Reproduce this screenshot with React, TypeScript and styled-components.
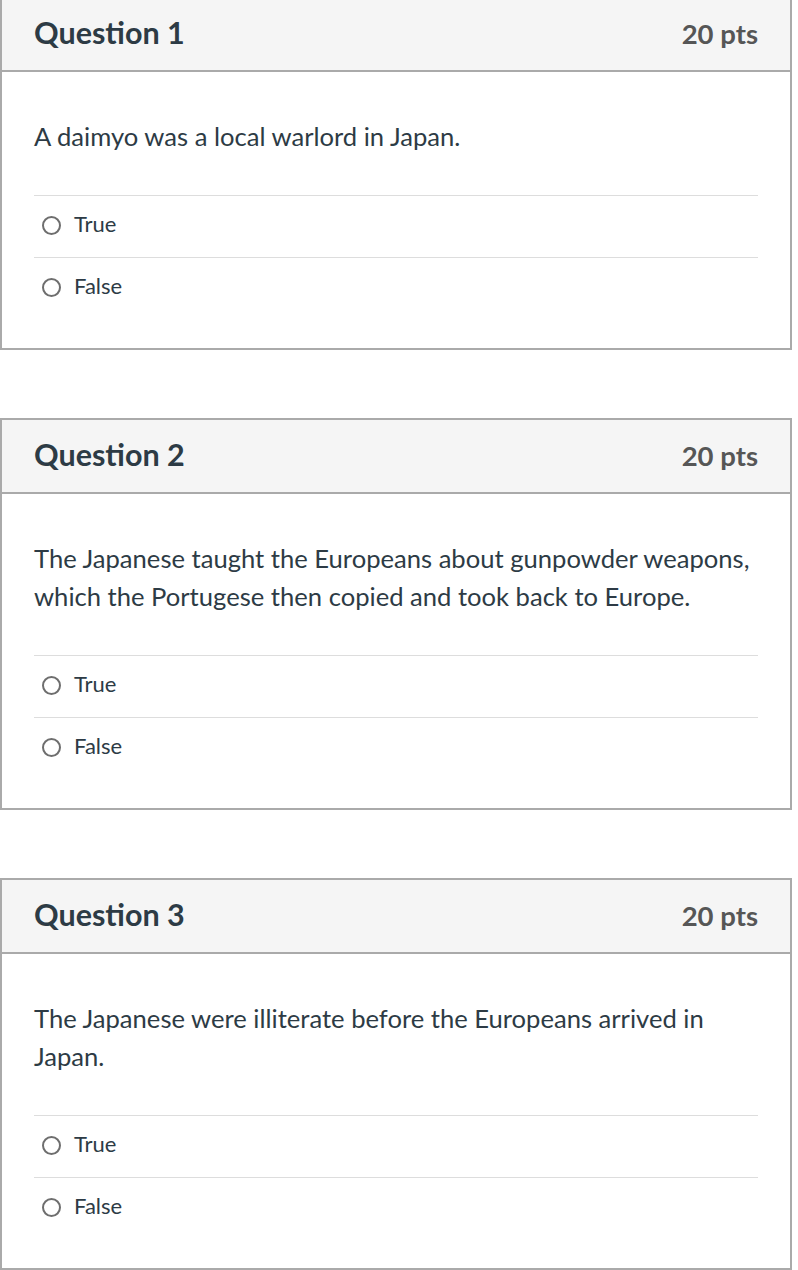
import * as React from 'react';
import styled, { createGlobalStyle } from 'styled-components';

const GlobalStyle = createGlobalStyle`
  html, body {
    margin: 0;
    padding: 0;
    background: #ffffff;
  }
  body {
    font-family: Lato, "Noto Sans", "Liberation Sans", sans-serif;
    color: #2d3b45;
  }
`;

export const Page = styled.div`
  width: 798px;
  display: flex;
  flex-direction: column;
  gap: 68px;
  margin-top: -4px;
`;

export const Card = styled.section`
  width: 792px;
  box-sizing: border-box;
  border: 2px solid #aaaaaa;
  background: #ffffff;
`;

export const Header = styled.header`
  height: 74px;
  box-sizing: border-box;
  padding: 0 32px 5px;
  display: flex;
  align-items: center;
  justify-content: space-between;
  background: #f5f5f5;
  border-bottom: 2px solid #aaaaaa;
`;

export const Title = styled.h2`
  margin: 0;
  font-size: 30.5px;
  font-weight: 700;
  color: #2d3b45;
`;

export const Points = styled.span`
  margin-top: 3px;
  font-size: 27.5px;
  font-weight: 700;
  color: #565656;
`;

export const Body = styled.div`
  padding: 45px 32px 29px;
`;

export const Text = styled.p`
  margin: 0 0 40px;
  font-size: 25.6px;
  line-height: 38px;
  color: #2d3b45;
`;

export const Answers = styled.div`
  display: flex;
  flex-direction: column;
`;

export const Answer = styled.label`
  height: 62px;
  box-sizing: border-box;
  border-top: 1px solid #dddddd;
  padding: 0 0 6px 8px;
  display: flex;
  align-items: center;
  gap: 13px;
  font-size: 22px;
  color: #2d3b45;
`;

export const Radio = styled.span`
  width: 19px;
  height: 19px;
  margin-top: 3px;
  box-sizing: border-box;
  border: 2px solid #6e6e6e;
  border-radius: 50%;
  flex: none;
`;

type Question = { title: string; points: string; text: string };

const questions: Question[] = [
  { title: 'Question 1', points: '20 pts', text: 'A daimyo was a local warlord in Japan.' },
  {
    title: 'Question 2',
    points: '20 pts',
    text: 'The Japanese taught the Europeans about gunpowder weapons, which the Portugese then copied and took back to Europe.',
  },
  {
    title: 'Question 3',
    points: '20 pts',
    text: 'The Japanese were illiterate before the Europeans arrived in Japan.',
  },
];

const App = (): JSX.Element => (
  <>
    <GlobalStyle />
    <Page>
      {questions.map((q) => (
        <Card key={q.title}>
          <Header>
            <Title>{q.title}</Title>
            <Points>{q.points}</Points>
          </Header>
          <Body>
            <Text>{q.text}</Text>
            <Answers>
              {['True', 'False'].map((a) => (
                <Answer key={a}>
                  <Radio />
                  {a}
                </Answer>
              ))}
            </Answers>
          </Body>
        </Card>
      ))}
    </Page>
  </>
);

export default App;
